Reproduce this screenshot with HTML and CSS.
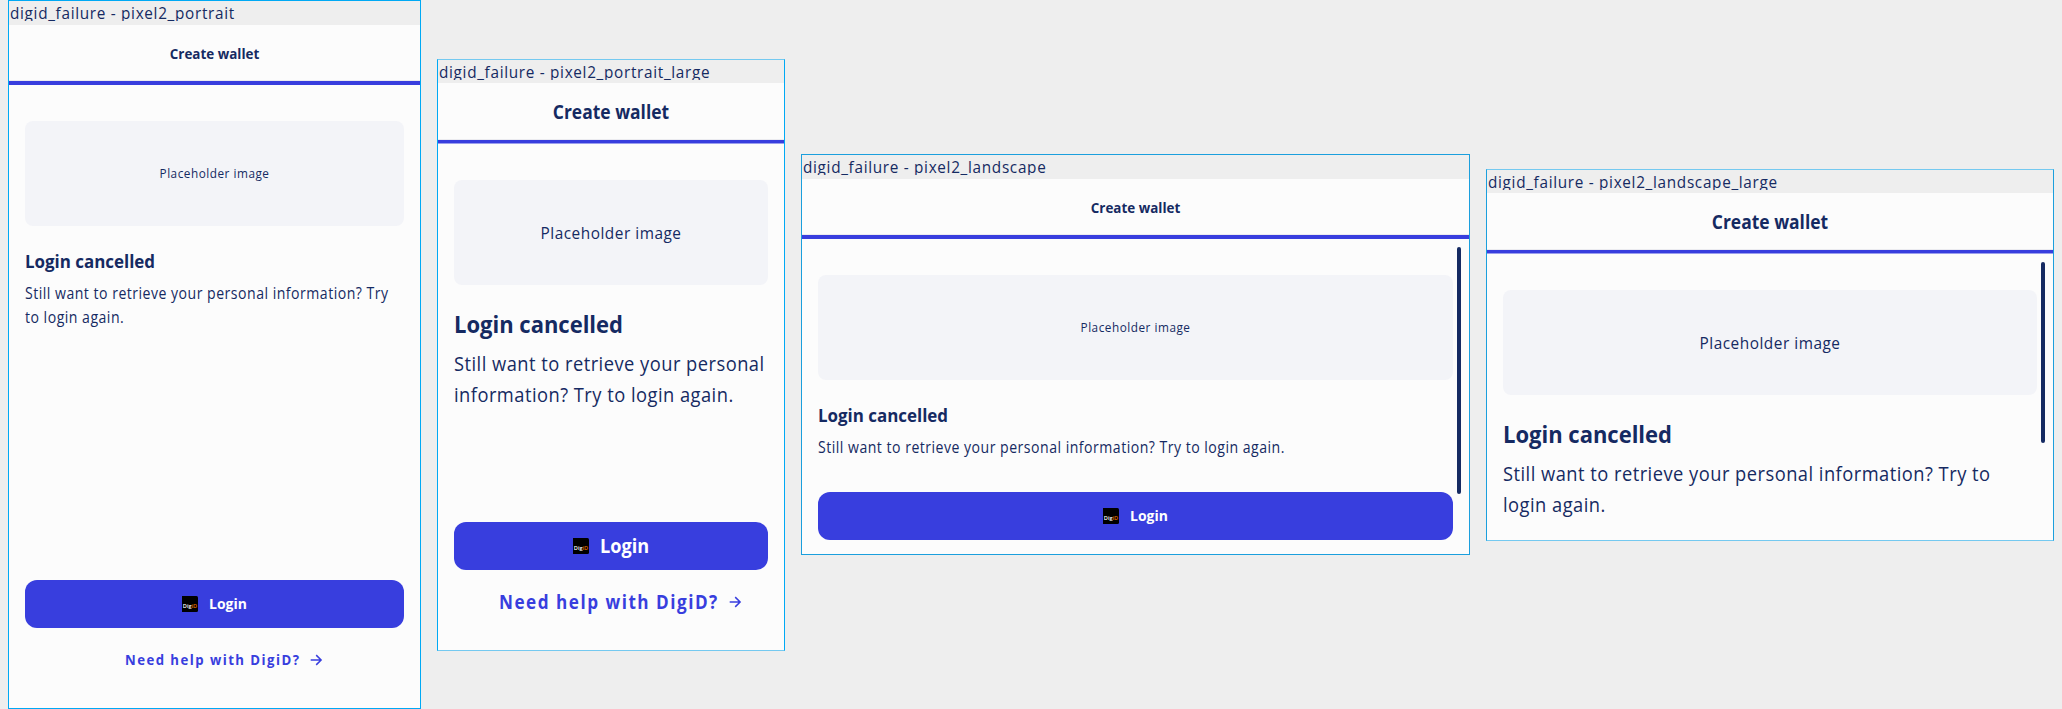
FILE: index.html
```html
<!DOCTYPE html>
<html lang="en">
<head>
<meta charset="utf-8">
<title>digid_failure</title>
<link rel="stylesheet" href="styles.css">
</head>
<body>
<svg class="defs" aria-hidden="true">
  <symbol id="digid" viewBox="0 0 16 16">
    <path d="M0 0H14.5Q16 0 16 1.5V14.5Q16 16 14.5 16H0Z" fill="#000"/>
    <text x="0.8" y="12.1" class="logo-text">Dig<tspan fill="#e17000">iD</tspan></text>
  </symbol>
  <symbol id="arrow" viewBox="0 0 16 16">
    <path d="M2.7 8H13M8.2 3.1L13.1 8L8.2 12.9" fill="none" stroke="currentColor" stroke-width="1.5"/>
  </symbol>
</svg>

<main class="board">
  <section class="frame portrait">
    <div class="label"><p>digid_failure - pixel2_portrait</p></div>
    <header><p>Create wallet</p></header>
    <div class="progress"></div>
    <div class="content">
      <div class="placeholder"><p>Placeholder image</p></div>
      <h1>Login cancelled</h1>
      <p class="body">Still want to retrieve your personal information? Try<br>to login again.</p>
      <div class="actions">
        <button class="login"><svg><use href="#digid"/></svg><span>Login</span></button>
        <a class="help"><span>Need help with DigiD?</span><svg><use href="#arrow"/></svg></a>
      </div>
    </div>
  </section>

  <section class="frame portrait large">
    <div class="label"><p>digid_failure - pixel2_portrait_large</p></div>
    <header><p>Create wallet</p></header>
    <div class="progress"></div>
    <div class="content">
      <div class="placeholder"><p>Placeholder image</p></div>
      <h1>Login cancelled</h1>
      <p class="body">Still want to retrieve your personal<br>information? Try to login again.</p>
      <div class="actions">
        <button class="login"><svg><use href="#digid"/></svg><span>Login</span></button>
        <a class="help"><span>Need help with DigiD?</span><svg><use href="#arrow"/></svg></a>
      </div>
    </div>
  </section>

  <section class="frame landscape">
    <div class="label"><p>digid_failure - pixel2_landscape</p></div>
    <header><p>Create wallet</p></header>
    <div class="progress"></div>
    <div class="content">
      <div class="scrollbar"></div>
      <div class="placeholder"><p>Placeholder image</p></div>
      <h1>Login cancelled</h1>
      <p class="body">Still want to retrieve your personal information? Try to login again.</p>
      <div class="actions">
        <button class="login"><svg><use href="#digid"/></svg><span>Login</span></button>
      </div>
    </div>
  </section>

  <section class="frame landscape large">
    <div class="label"><p>digid_failure - pixel2_landscape_large</p></div>
    <header><p>Create wallet</p></header>
    <div class="progress"></div>
    <div class="content">
      <div class="scrollbar"></div>
      <div class="placeholder"><p>Placeholder image</p></div>
      <h1>Login cancelled</h1>
      <p class="body">Still want to retrieve your personal information? Try to<br>login again.</p>
    </div>
  </section>
</main>
</body>
</html>
```
FILE: styles.css
```css
* { box-sizing: border-box; margin: 0; padding: 0; }

body {
  background: #eee;
  color: #152a62;
  font-family: "Open Sans", "Noto Sans", sans-serif;
  overflow: hidden;
}

.defs { display: none; }
.logo-text { font: 600 5.6px "Open Sans", sans-serif; letter-spacing: 0; fill: #fff; }

.board {
  display: flex;
  align-items: flex-start;
  gap: 16px;
  padding-left: 8px;
  height: 709px;
}

.frame {
  display: flex;
  flex-direction: column;
  flex: none;
  border: 1px solid #00a9f4;
  white-space: nowrap;
}
.portrait { width: 413px; height: 709px; }
.portrait.large { width: 348px; height: 592px; margin-top: 59px; }
.landscape { width: 669px; height: 401px; margin-top: 154px; border-color: #1b9fdd; }
.landscape.large { width: 568px; height: 372px; margin-top: 169px; }
.frame.large { border-top-color: #74c9f0; border-bottom-color: #74c9f0; }

/* The typeface is narrowed horizontally throughout. */
.label p, h1, .body, .login span, .help span { transform-origin: 0 0; }

.label { height: 24px; padding-left: .5px; }
.label p {
  height: 20px;
  overflow: hidden;
  font-size: 17px;
  line-height: 23px;
  letter-spacing: .77px;
  transform: scaleX(.9);
}

header {
  height: 56px;
  background: #fcfcfc;
  border-bottom: 1px solid #ebebef;
  font-size: 15px;
  font-weight: 700;
  line-height: 56px;
  text-align: center;
}
header p { transform: scaleX(.895); }
.progress { height: 4px; background: #383ede; }

.content {
  position: relative;
  display: flex;
  flex-direction: column;
  flex: 1;
  min-height: 0;
  padding: 36px 16px 24px;
  background: #fcfcfc;
}
.placeholder {
  flex: none;
  height: 105px;
  border-radius: 8px;
  background: #f3f4f8;
  font-size: 13px;
  line-height: 105px;
  letter-spacing: .57px;
  text-align: center;
}
.placeholder p { transform: scaleX(.905); }
h1 {
  margin-top: 23px;
  font-size: 18px;
  line-height: 24px;
  transform: scaleX(.94);
}
.body {
  margin-top: 8px;
  font-size: 16px;
  line-height: 24px;
  letter-spacing: .56px;
  transform: scaleX(.88);
}

.actions { display: flex; flex-direction: column; gap: 8px; margin-top: auto; }
.login, .help {
  display: flex;
  align-items: center;
  justify-content: center;
  height: 48px;
  font: 700 15px/22px "Open Sans", "Noto Sans", sans-serif;
}
.login {
  gap: 11px;
  border: 0;
  border-radius: 12px;
  background: #383ede;
  color: #fff;
}
.login span {
  width: 38px;
  margin-top: -2px;
  transform: scaleX(.93);
}
.help {
  gap: 7.5px;
  padding-left: 20px;
  color: #383ede;
  letter-spacing: 1.65px;
}
.help span {
  width: 176px;
  margin-top: -2px;
  transform: scaleX(.88);
}
.login svg, .help svg { width: 16px; height: 16px; flex: none; }

.landscape .content { padding-bottom: 14px; }
.scrollbar {
  position: absolute;
  top: 8px;
  right: 8px;
  width: 4px;
  height: 247px;
  border-radius: 2px;
  background: #152a62;
}

.large .label { height: 23px; }
.large header { height: 57px; font-size: 19.5px; line-height: 58px; }
.large .progress { border-bottom: 1px solid #9b9eee; }
.large .content { padding-top: 35.5px; padding-bottom: 24.5px; }
.large .placeholder { font-size: 17px; }
.large h1 { margin-top: 24px; font-size: 23.4px; line-height: 30px; }
.large .body { margin-top: 9px; font-size: 20.8px; line-height: 31px; letter-spacing: .54px; }
.large .login, .large .help { font-size: 19.5px; line-height: 28px; }
.large .login span { width: 48.8px; margin-top: 0; }
.large .help span { width: 220px; margin-top: 0; }
.large .help { letter-spacing: 1.7px; }
.large .scrollbar { top: 7.5px; height: 181px; }
```
